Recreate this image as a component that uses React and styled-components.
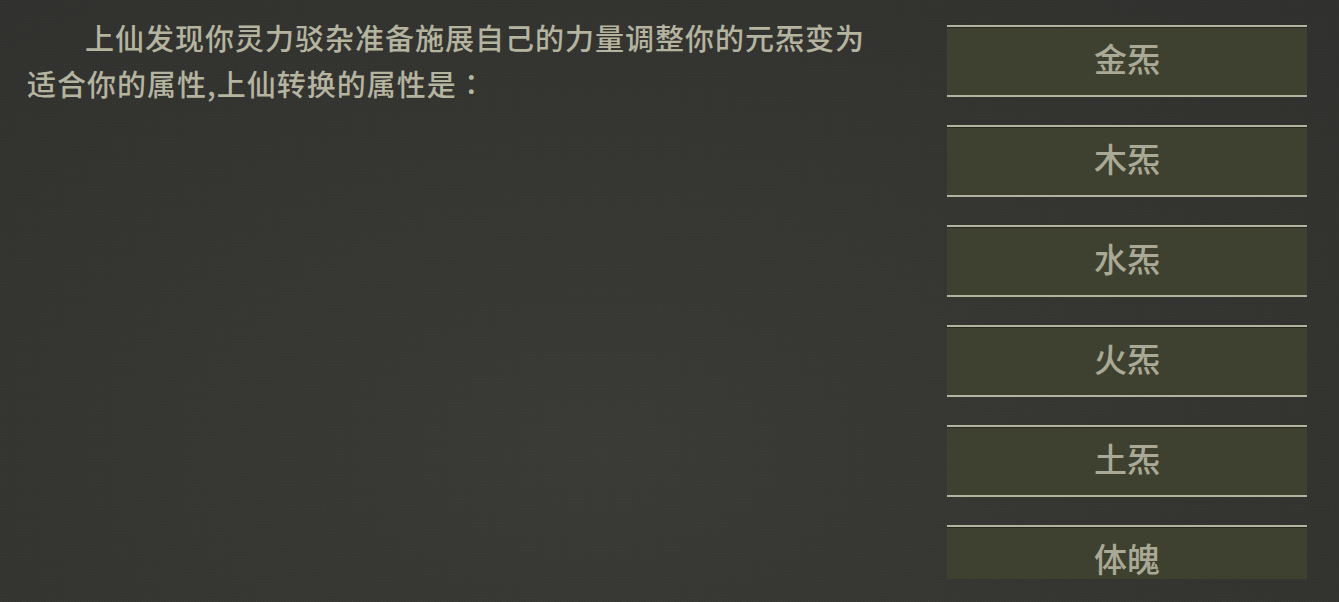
import React from 'react'
import styled, { createGlobalStyle } from 'styled-components'

const GlobalStyle = createGlobalStyle`
  html, body {
    margin: 0;
    padding: 0;
    height: 100%;
  }
  body {
    background-color: #343431;
    background-image:
      radial-gradient(rgba(255, 255, 255, 0.018) 1px, transparent 1px),
      radial-gradient(ellipse at 45% 75%, #3a3a36 0%, #343431 55%, #30302e 100%);
    background-size: 3px 3px, 100% 100%;
    font-family: "Noto Sans CJK SC", "Noto Sans", sans-serif;
    overflow: hidden;
  }
`

const Screen = styled.div`
  display: flex;
  width: 1339px;
  height: 602px;
  box-sizing: border-box;
`

const Story = styled.div`
  width: 850px;
  padding: 14px 0 0 27px;
`

const Paragraph = styled.p`
  margin: 0;
  font-size: 29px;
  font-weight: 500;
  letter-spacing: 1px;
  line-height: 46px;
  text-indent: 2em;
  color: #b5b49f;
`

// full-width colon sits centred in the reference, as in TC fonts
const Colon = styled.span`
  font-family: "Noto Sans CJK TC", "Noto Sans CJK SC", sans-serif;
`

const Choices = styled.div`
  margin: 25px 32px 0 auto;
  width: 360px;
  height: 554px;
  overflow: hidden;
  display: flex;
  flex-direction: column;
  gap: 28px;
`

const Choice = styled.button`
  flex: 0 0 72px;
  box-sizing: border-box;
  height: 72px;
  padding: 0;
  border: none;
  border-top: 2px solid #b4b49e;
  border-bottom: 2px solid #b4b49e;
  background: #3f4130;
  box-shadow: inset 0 1px 0 rgba(0, 0, 0, 0.35);
  color: #a9a995;
  font-family: inherit;
  font-size: 33px;
  font-weight: 500;
  line-height: 62px;
  text-align: center;
  display: flex;
  justify-content: center;
  align-items: flex-start;
  cursor: pointer;
`

const options = ['金炁', '木炁', '水炁', '火炁', '土炁', '体魄']

export default function App() {
  return (
    <>
      <GlobalStyle />
      <Screen>
        <Story>
          <Paragraph>
            上仙发现你灵力驳杂准备施展自己的力量调整你的元炁变为适合你的属性,上仙转换的属性是<Colon>：</Colon>
          </Paragraph>
        </Story>
        <Choices>
          {options.map((o) => (
            <Choice key={o}>{o}</Choice>
          ))}
        </Choices>
      </Screen>
    </>
  )
}
